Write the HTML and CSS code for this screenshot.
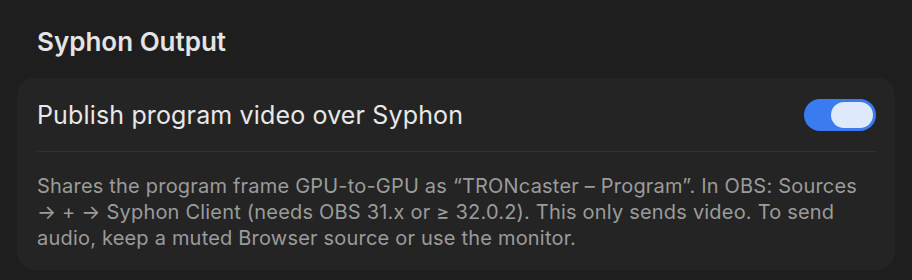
FILE: index.html
```html
<!DOCTYPE html>
<html lang="en">
<head>
<meta charset="utf-8">
<title>Syphon Output</title>
<link rel="stylesheet" href="styles.css">
</head>
<body>
<section class="section">
  <h2 class="section-title">Syphon Output</h2>
  <div class="card">
    <div class="row">
      <span class="row-label">Publish program video over Syphon</span>
      <button class="toggle is-on" type="button" role="switch" aria-checked="true" aria-label="Publish program video over Syphon">
        <span class="toggle-knob"></span>
      </button>
    </div>
    <div class="divider"></div>
    <p class="desc">Shares the program frame GPU-to-GPU as “TRONcaster – Program”. In OBS: Sources → + → Syphon Client (needs OBS 31.x or ≥ 32.0.2). This only sends video. To send audio, keep a muted Browser source or use the monitor.</p>
  </div>
</section>
</body>
</html>
```

FILE: styles.css
```css
html, body {
  margin: 0;
  padding: 0;
  background: #1e1e1e;
}

body {
  font-family: "Inter", "Noto Sans", "Liberation Sans", sans-serif;
  color: #e6e6e6;
  width: 912px;
  height: 280px;
  overflow: hidden;
}

.section {
  padding: 26px 17px 0 17px;
}

.section-title {
  margin: 0 0 20px 0;
  padding-left: 20px;
  font-size: 26px;
  line-height: 32px;
  font-weight: 600;
  color: #e4e4e4;
  letter-spacing: 0;
}

.card {
  background: #242424;
  border-radius: 18px;
  padding: 0 19px 19px 20px;
}

.row {
  display: flex;
  align-items: center;
  justify-content: space-between;
  padding: 21px 0 20px 0;
}

.row-label {
  font-size: 25px;
  line-height: 32px;
  letter-spacing: 0.15px;
  color: #e8e8e8;
}

.toggle {
  width: 72px;
  height: 32px;
  border: none;
  border-radius: 16px;
  background: #3b7bf0;
  padding: 3px;
  display: flex;
  justify-content: flex-end;
  align-items: center;
  cursor: pointer;
}

.toggle-knob {
  width: 42px;
  height: 26px;
  border-radius: 13px;
  background: #dfe9fc;
}

.divider {
  height: 1px;
  background: #303030;
}

.desc {
  margin: 0;
  padding-top: 21px;
  font-size: 20px;
  line-height: 26px;
  letter-spacing: 0.2px;
  color: #9b9b9b;
}
```
